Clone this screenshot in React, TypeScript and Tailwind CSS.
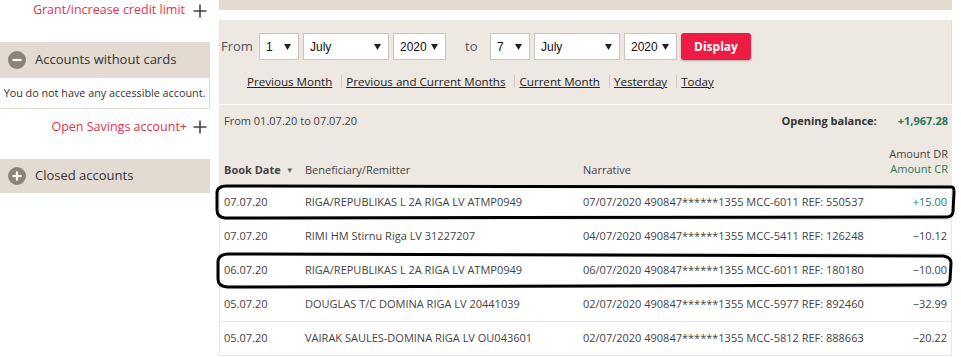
import React from "react";

const font = { fontFamily: '"Open Sans", "Noto Sans", sans-serif' };

function Plus() {
  return (
    <svg width="14" height="14" viewBox="0 0 14 14" className="shrink-0">
      <path d="M7 0.5V13.5M0.5 7H13.5" stroke="#444" strokeWidth="1.6" />
    </svg>
  );
}

function CircleIcon({ minus }: { minus?: boolean }) {
  return (
    <svg width="18" height="18" viewBox="0 0 18 18" className="shrink-0">
      <circle cx="9" cy="9" r="9" fill="#8c8378" />
      <path d="M4.5 9H13.5" stroke="#fff" strokeWidth="2.2" />
      {!minus && <path d="M9 4.5V13.5" stroke="#fff" strokeWidth="2.2" />}
    </svg>
  );
}

function Select({ value, w }: { value: string; w: string }) {
  return (
    <div
      className={`${w} h-[27px] bg-white border border-[#c9c4bf] flex items-center justify-between pl-[6px] pr-[7px] text-[12px] text-[#111]`}
      style={{ fontFamily: '"Liberation Sans", Arial, sans-serif' }}
    >
      <span>{value}</span>
      <svg width="7" height="7" viewBox="0 0 7 7">
        <path d="M0 1H7L3.5 7Z" fill="#222" />
      </svg>
    </div>
  );
}

function Sep() {
  return <span className="ml-[9px] mr-[4px] w-px h-[13px] bg-[#ccc]" />;
}

const rows = [
  ["07.07.20", "RIGA/REPUBLIKAS L 2A RIGA LV ATMP0949", "07/07/2020 490847******1355 MCC-6011 REF: 550537", "+15.00", true],
  ["07.07.20", "RIMI HM Stirnu Riga LV 31227207", "04/07/2020 490847******1355 MCC-5411 REF: 126248", "\u221210.12", false],
  ["06.07.20", "RIGA/REPUBLIKAS L 2A RIGA LV ATMP0949", "06/07/2020 490847******1355 MCC-6011 REF: 180180", "\u221210.00", false],
  ["05.07.20", "DOUGLAS T/C DOMINA RIGA LV 20441039", "02/07/2020 490847******1355 MCC-5977 REF: 892460", "\u221232.99", false],
  ["05.07.20", "VAIRAK SAULES-DOMINA RIGA LV OU043601", "02/07/2020 490847******1355 MCC-5812 REF: 888663", "\u221220.22", false],
] as const;

export default function App() {
  return (
    <div className="w-[961px] h-[357px] overflow-hidden bg-white flex text-[#333]" style={font}>
      {/* Sidebar */}
      <div className="w-[210px] shrink-0 flex flex-col">
        <div className="h-[21px] flex items-center justify-end pr-[3px] gap-[8px]">
          <span className="text-[12.5px] text-[#e8304f]">Grant/increase credit limit</span>
          <Plus />
        </div>
        <div className="h-[21px]" />
        <div className="h-[36px] bg-[#e3dbd2] flex items-center pl-[8px] gap-[9px]">
          <CircleIcon minus />
          <span className="text-[13px] text-[#333]">Accounts without cards</span>
        </div>
        <div className="h-[31px] flex items-center justify-center border-r border-b border-[#e3dbd2] text-[10.8px] text-[#333]">
          You do not have any accessible account.
        </div>
        <div className="h-[36px] flex items-center justify-end pr-[3px] gap-[6px]">
          <span className="text-[12.5px] text-[#e8304f]">Open Savings account+</span>
          <Plus />
        </div>
        <div className="h-[14px]" />
        <div className="h-[34px] bg-[#e3dbd2] flex items-center pl-[8px] gap-[9px]">
          <CircleIcon />
          <span className="text-[13px] text-[#333]">Closed accounts</span>
        </div>
      </div>

      <div className="w-[9px] shrink-0" />

      {/* Main */}
      <div className="w-[733px] shrink-0 flex flex-col">
        <div className="h-[10px] bg-[#e3dbd2]" />
        <div className="h-[10px]" />
        <div className="h-[84px] bg-[#ede8e2] border-r border-[#e3dcd4] flex flex-col">
          <div className="flex items-center pt-[13px] pl-[2px]">
            <span className="text-[13px] text-[#555] w-[38px]">From</span>
            <div className="flex gap-[4px]">
              <Select value="1" w="w-[40px]" />
              <Select value="July" w="w-[86px]" />
              <Select value="2020" w="w-[53px]" />
            </div>
            <span className="text-[13px] text-[#555] ml-[19px] w-[25px]">to</span>
            <div className="flex gap-[4px]">
              <Select value="7" w="w-[40px]" />
              <Select value="July" w="w-[86px]" />
              <Select value="2020" w="w-[53px]" />
              <div className="w-[70px] h-[27px] rounded-[3px] bg-[#ee1c45] shadow-[0_1px_2px_rgba(0,0,0,0.25)] flex items-center justify-center text-white text-[12px] font-bold">
                Display
              </div>
            </div>
          </div>
          <div className="flex items-center mt-[13px] pl-[28px] text-[11.6px] text-[#222]">
            <span className="underline">Previous Month</span>
            <Sep />
            <span className="underline">Previous and Current Months</span>
            <Sep />
            <span className="underline">Current Month</span>
            <Sep />
            <span className="underline">Yesterday</span>
            <Sep />
            <span className="underline">Today</span>
          </div>
        </div>
        <div className="h-px" />
        <div className="h-[81px] bg-[#ede8e2] flex flex-col text-[11px] text-[#444] pl-[5px] pr-[4px]">
          <div className="flex items-center justify-between h-[33px] shrink-0">
            <span>From 01.07.20 to 07.07.20</span>
            <div className="flex items-center font-bold">
              <span className="text-[#333]">Opening balance:</span>
              <span className="text-[#2a7a5a] ml-[21px]">+1,967.28</span>
            </div>
          </div>
          <div className="flex items-end h-[41px] shrink-0 pb-[1px]">
            <div className="w-[81px] font-bold text-[#444] flex items-center gap-[5px]">
              Book Date <span className="text-[8px] text-[#666]">▼</span>
            </div>
            <div className="w-[278px]">Beneficiary/Remitter</div>
            <div className="flex-1">Narrative</div>
            <div className="text-right leading-[15px] pb-[2px]">
              <div>Amount DR</div>
              <div className="text-[#2a7a5a]">Amount CR</div>
            </div>
          </div>
        </div>
        <div className="relative">
          {rows.map((r, i) => (
            <div
              key={i}
              className="h-[34px] bg-white border-l border-r border-b border-[#ece7e1] flex items-center pl-[4px] pr-[4px] text-[11px] text-[#444]"
            >
              <div className="w-[81px]">{r[0]}</div>
              <div className="w-[278px]">{r[1]}</div>
              <div className="flex-1">{r[2]}</div>
              <div className={r[4] ? "text-[#2a7a5a]" : "text-[#444]"}>{r[3]}</div>
            </div>
          ))}
          <svg
            className="absolute left-[-4px] top-[-2px] pointer-events-none"
            width="742"
            height="120"
            viewBox="0 0 742 120"
          >
            <path
              d="M12 2 L737 3 Q739 3 739 8 L738 28 Q737 33 732 33 L10 34 Q2 33 2 26 L2 9 Q2 2 12 2 Z"
              fill="none"
              stroke="#000"
              strokeWidth="3"
            />
            <path
              d="M14 70 L728 72 Q736 73 736 79 L735 96 Q734 101 728 101 L12 103 Q3 102 3 95 L3 77 Q4 70 14 70 Z"
              fill="none"
              stroke="#000"
              strokeWidth="3"
            />
          </svg>
        </div>
      </div>
    </div>
  );
}
